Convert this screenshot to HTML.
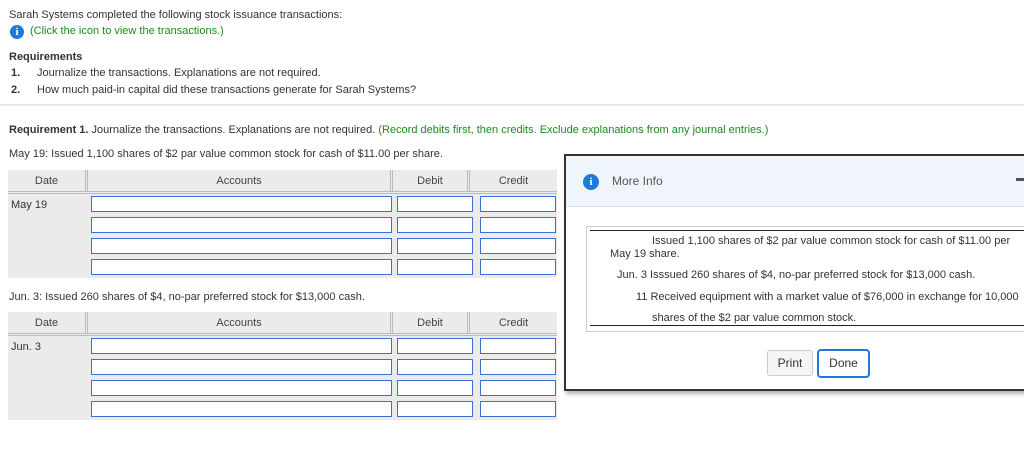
<!DOCTYPE html>
<html><head><style>
body{margin:0;width:1024px;height:460px;overflow:hidden;background:#fff;font-family:"Liberation Sans",sans-serif;font-size:11px;color:#333;position:relative}
.a{position:absolute;white-space:nowrap}
.g{color:#1e8a1e}
.hdr{position:absolute;background:#ebebeb;height:21px;border-bottom:3px double #bbb}
.hc{position:absolute;top:0;height:21px;line-height:22px;text-align:center;color:#444;border-right:3px double #bbb}
.body{position:absolute;background:#ebebeb}
.in{position:absolute;height:14px;border:1px solid #3a70d8;background:#fff}
.ib{display:inline-block;width:14px;height:14px;border-radius:50%;background:#1d7ad9;color:#fff;font:bold 11px "Liberation Serif",serif;text-align:center;line-height:14px}
</style></head><body>
<div class="a" style="left:9px;top:9px">Sarah Systems completed the following stock issuance transactions:</div>
<div class="a" style="left:10px;top:25px"><span class="ib">i</span></div>
<div class="a g" style="left:30px;top:25px">(Click the icon to view the transactions.)</div>
<div class="a" style="left:9px;top:51px;font-weight:bold">Requirements</div>
<div class="a" style="left:11px;top:67px;font-weight:bold">1.</div>
<div class="a" style="left:37px;top:67px">Journalize the transactions. Explanations are not required.</div>
<div class="a" style="left:11px;top:84px;font-weight:bold">2.</div>
<div class="a" style="left:37px;top:84px">How much paid-in capital did these transactions generate for Sarah Systems?</div>
<div class="a" style="left:0;top:104px;width:1024px;height:2px;background:#e6e6ee"></div>
<div class="a" style="left:9px;top:124px"><b>Requirement 1.</b> Journalize the transactions. Explanations are not required. <span class="g">(Record debits first, then credits. Exclude explanations from any journal entries.)</span></div>
<div class="a" style="left:9px;top:148px">May 19: Issued 1,100 shares of $2 par value common stock for cash of $11.00 per share.</div>

<div class="hdr" style="left:8px;top:170px;width:549px">
<div class="hc" style="left:0;width:77px">Date</div>
<div class="hc" style="left:80px;width:302px">Accounts</div>
<div class="hc" style="left:385px;width:74px">Debit</div>
<div class="hc" style="left:462px;width:87px;border-right:0">Credit</div></div>
<div class="body" style="left:8px;top:194px;width:549px;height:84px"></div>
<div class="a" style="left:11px;top:199px">May 19</div>
<div class="in" style="left:91px;top:196px;width:299px"></div><div class="in" style="left:397px;top:196px;width:74px"></div><div class="in" style="left:480px;top:196px;width:74px"></div>
<div class="in" style="left:91px;top:217px;width:299px"></div><div class="in" style="left:397px;top:217px;width:74px"></div><div class="in" style="left:480px;top:217px;width:74px"></div>
<div class="in" style="left:91px;top:238px;width:299px"></div><div class="in" style="left:397px;top:238px;width:74px"></div><div class="in" style="left:480px;top:238px;width:74px"></div>
<div class="in" style="left:91px;top:259px;width:299px"></div><div class="in" style="left:397px;top:259px;width:74px"></div><div class="in" style="left:480px;top:259px;width:74px"></div>

<div class="a" style="left:9px;top:291px">Jun. 3: Issued 260 shares of $4, no-par preferred stock for $13,000 cash.</div>
<div class="hdr" style="left:8px;top:312px;width:549px">
<div class="hc" style="left:0;width:77px">Date</div>
<div class="hc" style="left:80px;width:302px">Accounts</div>
<div class="hc" style="left:385px;width:74px">Debit</div>
<div class="hc" style="left:462px;width:87px;border-right:0">Credit</div></div>
<div class="body" style="left:8px;top:336px;width:549px;height:84px"></div>
<div class="a" style="left:11px;top:341px">Jun. 3</div>
<div class="in" style="left:91px;top:338px;width:299px"></div><div class="in" style="left:397px;top:338px;width:74px"></div><div class="in" style="left:480px;top:338px;width:74px"></div>
<div class="in" style="left:91px;top:359px;width:299px"></div><div class="in" style="left:397px;top:359px;width:74px"></div><div class="in" style="left:480px;top:359px;width:74px"></div>
<div class="in" style="left:91px;top:380px;width:299px"></div><div class="in" style="left:397px;top:380px;width:74px"></div><div class="in" style="left:480px;top:380px;width:74px"></div>
<div class="in" style="left:91px;top:401px;width:299px"></div><div class="in" style="left:397px;top:401px;width:74px"></div><div class="in" style="left:480px;top:401px;width:74px"></div>

<div class="a" style="left:564px;top:154px;width:470px;height:233px;border:2px solid #333;background:#fff;box-shadow:2px 3px 4px rgba(0,0,0,.3)">
<div class="a" style="left:0;top:0;width:470px;height:50px;background:#f0f5fc;border-bottom:1px solid #cfe0f0"></div>
<div class="a" style="left:17px;top:18px"><span class="ib" style="width:16px;height:16px;line-height:16px">i</span></div>
<div class="a" style="left:46px;top:18px;font-size:12px;color:#555">More Info</div>
<div class="a" style="left:450px;top:22px;width:12px;height:3px;background:#555"></div>
<div class="a" style="left:20px;top:70px;width:460px;height:104px;border:1px solid #ccc"></div>
<div class="a" style="left:24px;top:74px;width:460px;height:94px;border-top:1px solid #222;border-bottom:1px solid #222"></div>
<div class="a" style="left:86px;top:79px">Issued 1,100 shares of $2 par value common stock for cash of $11.00 per</div>
<div class="a" style="left:44px;top:92px">May 19 share.</div>
<div class="a" style="left:51px;top:113px">Jun. 3 Isssued 260 shares of $4, no-par preferred stock for $13,000 cash.</div>
<div class="a" style="left:70px;top:135px">11 Received equipment with a market value of $76,000 in exchange for 10,000</div>
<div class="a" style="left:86px;top:156px">shares of the $2 par value common stock.</div>
<div class="a" style="left:201px;top:194px;width:44px;height:24px;border:1px solid #ccc;border-radius:3px;background:#f5f5f5;text-align:center;line-height:24px;font-size:12px">Print</div>
<div class="a" style="left:251px;top:193px;width:49px;height:25px;border:2px solid #1d7ad9;border-radius:4px;background:#fff;text-align:center;line-height:25px;font-size:12px">Done</div>
</div>
</body></html>
